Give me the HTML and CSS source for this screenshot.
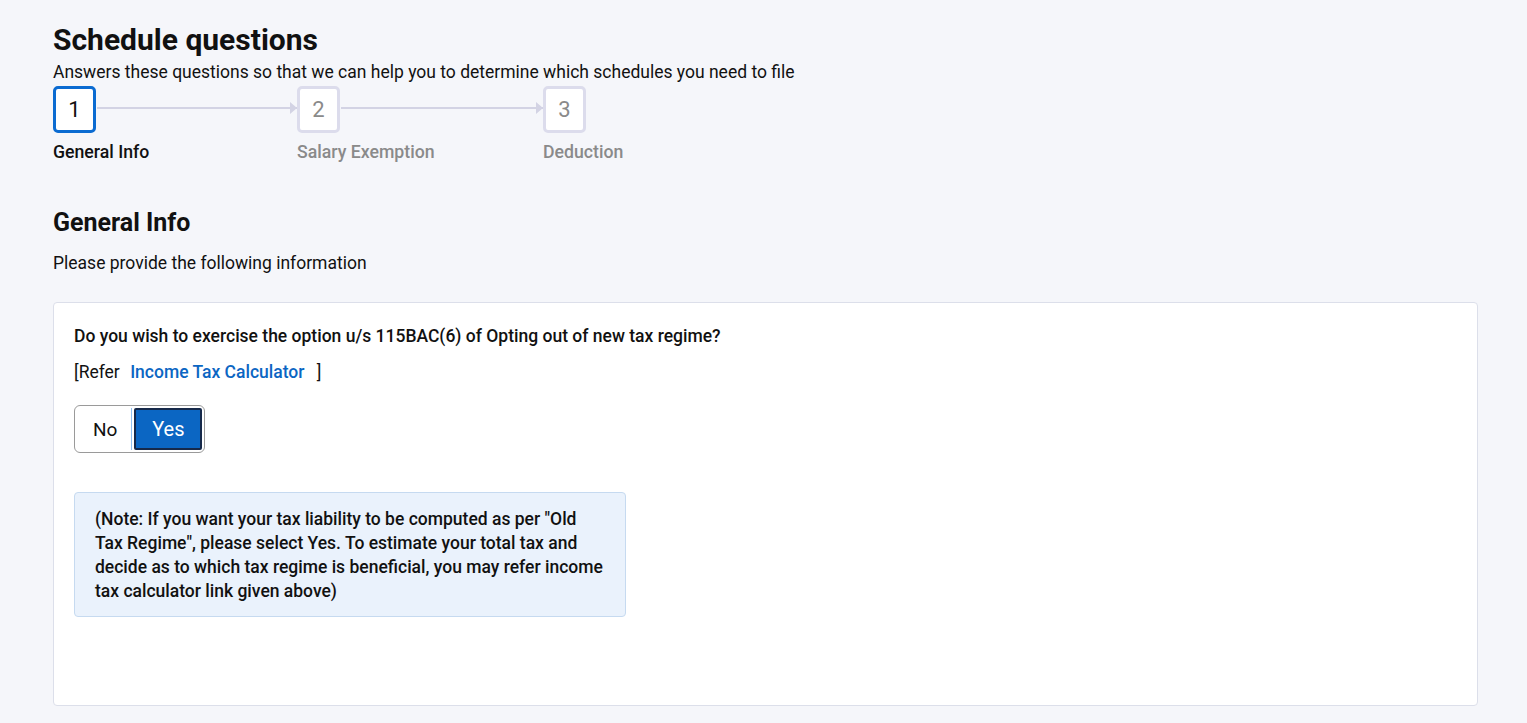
FILE: index.html
```html
<!DOCTYPE html>
<html lang="en">
<head>
  <meta charset="UTF-8" />
  <meta name="viewport" content="width=device-width, initial-scale=1.0" />
  <title>Schedule questions</title>
  <link rel="stylesheet" href="styles.css">
</head>
<body>
  <div class="page">
    <h1 class="title">Schedule questions</h1>
    <p class="subtitle">Answers these questions so that we can help you to determine which schedules you need to file</p>

    <div class="stepper">
      <div class="step active">
        <div class="step-box">1</div>
        <div class="step-label">General Info</div>
      </div>
      <div class="step-line"></div>
      <div class="step">
        <div class="step-box">2</div>
        <div class="step-label">Salary Exemption</div>
      </div>
      <div class="step-line"></div>
      <div class="step">
        <div class="step-box">3</div>
        <div class="step-label">Deduction</div>
      </div>
    </div>

    <h2 class="section-title">General Info</h2>
    <p class="section-desc">Please provide the following information</p>

    <div class="card">
      <p class="question">Do you wish to exercise the option u/s 115BAC(6) of Opting out of new tax regime?</p>
      <p class="refer">[Refer <a href="#" class="link">Income Tax Calculator</a> ]</p>

      <div class="toggle">
        <button class="toggle-btn">No</button>
        <button class="toggle-btn selected">Yes</button>
      </div>

      <div class="note">(Note: If you want your tax liability to be computed as per "Old Tax Regime", please select Yes. To estimate your total tax and decide as to which tax regime is beneficial, you may refer income tax calculator link given above)</div>
    </div>
  </div>
</body>
</html>
```

FILE: styles.css
```css
body {
  margin: 0;
  padding: 0;
  background: #f5f6fa;
  font-family: Roboto, "Liberation Sans", sans-serif;
  color: #111;
}
.page {
  padding: 22px 49px 18px 53px;
}
.title {
  margin: 0;
  font-size: 30px;
  font-weight: 700;
  line-height: 36px;
}
.subtitle {
  margin: 2px 0 0;
  font-size: 17.5px;
  line-height: 24px;
}
.stepper {
  display: flex;
  align-items: flex-start;
  margin-top: 2px;
}
.step {
  display: flex;
  flex-direction: column;
  width: 44px;
}
.step-box {
  box-sizing: border-box;
  width: 43px;
  height: 47px;
  border: 3px solid #dcdcec;
  border-radius: 5px;
  background: #fff;
  color: #8a8a8a;
  font-size: 22px;
  display: flex;
  align-items: center;
  justify-content: center;
}
.step.active .step-box {
  border-color: #0b6bd1;
  color: #111;
}
.step-label {
  margin-top: 9px;
  font-size: 17.7px;
  font-weight: 500;
  color: #8a8a8a;
  white-space: nowrap;
}
.step.active .step-label {
  color: #111;
}
.step-line {
  width: 200px;
  height: 2px;
  margin-top: 21px;
  background: #d3d3e4;
  position: relative;
}
.step-line + .step + .step-line {
  width: 202px;
}
.step-line::after {
  content: "";
  position: absolute;
  right: 0;
  top: -5px;
  border-left: 7px solid #d3d3e4;
  border-top: 6px solid transparent;
  border-bottom: 6px solid transparent;
}
.section-title {
  margin: 46px 0 0;
  font-size: 25px;
  font-weight: 700;
  line-height: 30px;
}
.section-desc {
  margin: 13px 0 0;
  font-size: 17.5px;
  line-height: 24px;
}
.card {
  margin-top: 27px;
  background: #fff;
  border: 1px solid #dcdfea;
  border-radius: 4px;
  padding: 20px 20px 88px;
}
.question {
  margin: 0;
  font-size: 17.5px;
  font-weight: 500;
  line-height: 26px;
}
.refer {
  margin: 10px 0 0;
  font-size: 17.5px;
  line-height: 26px;
}
.link {
  color: #0b66c3;
  font-weight: 500;
  text-decoration: none;
  margin: 0 8px 0 6px;
}
.toggle {
  display: inline-flex;
  margin-top: 20px;
  border: 1px solid #9a9a9a;
  border-radius: 6px;
  padding: 2px 2px 2px 0;
  background: #fff;
}
.toggle-btn {
  font-family: inherit;
  font-size: 19px;
  border: none;
  background: #fff;
  color: #111;
  height: 42px;
  padding: 0 14px 0 18px;
  cursor: pointer;
}
.toggle-btn:first-child {
  border-right: 1px solid #8fc0f2;
  border-radius: 6px 0 0 6px;
  margin-right: 2px;
}
.toggle-btn.selected {
  background: #0b66c3;
  color: #fff;
  font-size: 20px;
  border: 2px solid #16294a;
  border-radius: 2px;
  width: 68px;
  padding: 0;
}
.note {
  margin-top: 39px;
  width: 510px;
  padding: 14px 20px 13px;
  background: #eaf2fc;
  border: 1px solid #c6daf0;
  border-radius: 4px;
  font-size: 17.5px;
  font-weight: 500;
  line-height: 24px;
}
```
